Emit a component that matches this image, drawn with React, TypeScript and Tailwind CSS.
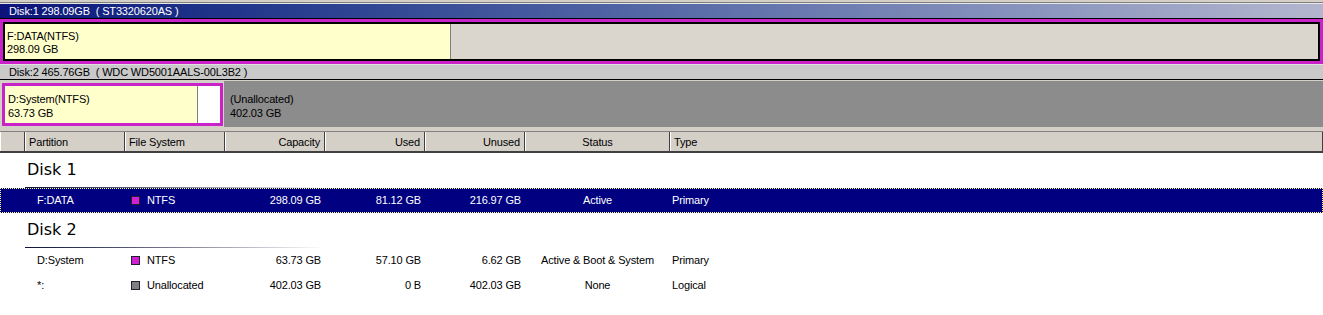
import React from "react";

type Row = {
    name: string;
    fs: string;
    swatch: string;
    capacity: string;
    used: string;
    unused: string;
    status: string;
    type: string;
    selected?: boolean;
};

const DISK1: Row[] = [
    { name: "F:DATA", fs: "NTFS", swatch: "bg-[#d020d0]", capacity: "298.09 GB", used: "81.12 GB", unused: "216.97 GB", status: "Active", type: "Primary", selected: true },
];

const DISK2: Row[] = [
    { name: "D:System", fs: "NTFS", swatch: "bg-[#d020d0]", capacity: "63.73 GB", used: "57.10 GB", unused: "6.62 GB", status: "Active & Boot & System", type: "Primary" },
    { name: "*:", fs: "Unallocated", swatch: "bg-[#808080]", capacity: "402.03 GB", used: "0 B", unused: "402.03 GB", status: "None", type: "Logical" },
];

// header cell: white highlight on the left, dark edge on the right
function HeaderCell({ label, className }: { label?: string; className: string }) {
    return (
        <div className={`h-full flex items-start pt-[4px] border-l border-l-white border-r border-r-[#404040] ${className}`}>
            {label}
        </div>
    );
}

function DiskHeading({ title }: { title: string }) {
    return (
        <div className="h-[35px] flex flex-col">
            <div className="h-[34px] pt-[7px] pl-[27px] font-['DejaVu_Sans',sans-serif] text-[16px] leading-[19px] tracking-normal">
                {title}
            </div>
            <div className="h-px w-[300px] ml-[25px] bg-gradient-to-r from-[#10103a] via-[#7c7c90] to-white" />
        </div>
    );
}

function PartitionRow({ row }: { row: Row }) {
    const base = row.selected
        ? "bg-[#000080] text-white outline-1 outline-dotted -outline-offset-1 outline-[#ffff7f]"
        : "bg-white text-black";
    return (
        <div className={`h-[25px] flex items-center ${base}`}>
            <div className="w-[25px]" />
            <div className="w-[100px] pl-[12px]">{row.name}</div>
            <div className="w-[100px] pl-[6px] flex items-center gap-[7px]">
                <span className={`shrink-0 w-[9px] h-[9px] border border-[#202030] ${row.swatch}`} />
                <span>{row.fs}</span>
            </div>
            <div className="w-[100px] pr-[4px] text-right">{row.capacity}</div>
            <div className="w-[100px] pr-[4px] text-right">{row.used}</div>
            <div className="w-[100px] pr-[4px] text-right">{row.unused}</div>
            <div className="w-[145px] text-center">{row.status}</div>
            <div className="flex-1 pl-[2px]">{row.type}</div>
        </div>
    );
}

export default function App() {
    return (
        <div className="w-[1323px] h-[315px] overflow-hidden bg-white font-['Liberation_Sans',Arial,sans-serif] text-[11px] tracking-[-0.15px] leading-[13px] text-black">
            {/* window frame top */}
            <div className="h-[2px] bg-[#d4d0c8]" />
            <div className="h-px bg-[#808080]" />
            <div className="h-px bg-[#e6e6e6]" />

            {/* Disk 1 */}
            <div className="h-[14px] pl-[9px] leading-[15px] text-white whitespace-pre bg-gradient-to-r from-[#0c127a] to-[#b4b6ce]">
                {"Disk:1 298.09GB  ( ST3320620AS )"}
            </div>
            <div className="h-px bg-black" />
            <div className="h-[45px] border-[3px] border-[#c822c8]">
                <div className="h-full flex border-2 border-black">
                    <div className="w-[446px] bg-[#ffffcc] border-r border-r-[#808080] pt-[6px] pl-[2px]">
                        <div>F:DATA(NTFS)</div>
                        <div>298.09 GB</div>
                    </div>
                    <div className="flex-1 bg-[#dbd6cd]" />
                </div>
            </div>
            <div className="h-px bg-[#e0e0e0]" />

            {/* Disk 2 */}
            <div className="h-[14px] pl-[9px] leading-[15px] whitespace-pre bg-[#c9c9c9]">
                {"Disk:2 465.76GB  ( WDC WD5001AALS-00L3B2 )"}
            </div>
            <div className="h-px bg-black" />
            <div className="h-[48px] flex bg-[#d4d0c8]">
                <div className="w-[221px] h-[43px] mt-[3px] ml-[2px] flex border-[3px] border-[#c822c8]">
                    <div className="w-[193px] bg-[#ffffcc] border-r border-r-[#808080] pt-[6px] pl-[3px] leading-[14px]">
                        <div>D:System(NTFS)</div>
                        <div>63.73 GB</div>
                    </div>
                    <div className="flex-1 bg-white" />
                </div>
                <div className="flex-1 h-[46px] mt-px ml-px bg-[#8c8c8c] pt-[11px] pl-[6px] leading-[14px]">
                    <div>(Unallocated)</div>
                    <div>402.03 GB</div>
                </div>
            </div>
            <div className="h-[3px] bg-[#d4d0c8]" />

            {/* column header */}
            <div className="h-[22px] flex bg-[#d4d0c8] border-t border-t-[#808080] border-b-2 border-b-[#404040]">
                <HeaderCell className="w-[25px]" />
                <HeaderCell label="Partition" className="w-[100px] pl-[3px]" />
                <HeaderCell label="File System" className="w-[100px] pl-[3px]" />
                <HeaderCell label="Capacity" className="w-[100px] pr-[4px] justify-end" />
                <HeaderCell label="Used" className="w-[100px] pr-[4px] justify-end" />
                <HeaderCell label="Unused" className="w-[100px] pr-[4px] justify-end" />
                <HeaderCell label="Status" className="w-[145px] justify-center" />
                <HeaderCell label="Type" className="flex-1 pl-[3px]" />
            </div>

            {/* partition list */}
            <DiskHeading title="Disk 1" />
            {DISK1.map((r) => (
                <PartitionRow key={r.name} row={r} />
            ))}
            <DiskHeading title="Disk 2" />
            {DISK2.map((r) => (
                <PartitionRow key={r.name} row={r} />
            ))}
        </div>
    );
}
